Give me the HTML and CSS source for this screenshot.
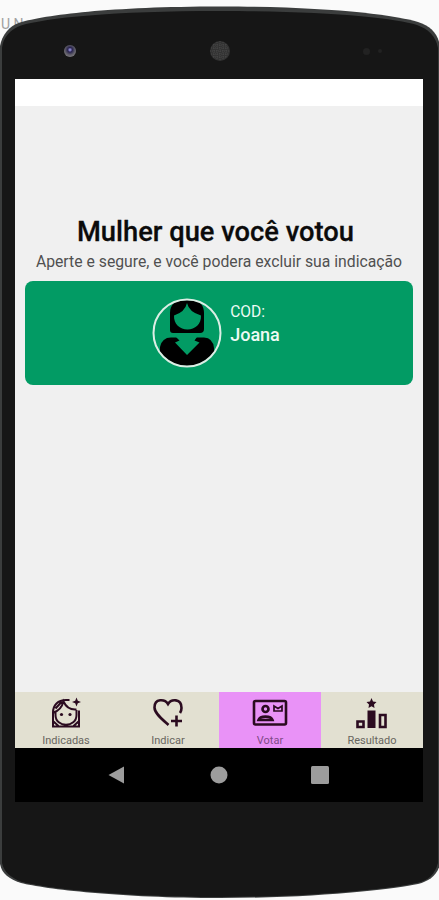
FILE: index.html
```
<!DOCTYPE html>
<html lang="pt-BR">
<head>
<meta charset="UTF-8" />
<meta name="viewport" content="width=device-width, initial-scale=1" />
<title>Votar</title>
<link rel="stylesheet" href="styles.css">
</head>
<body>
  <div class="phone">
    <span class="behind">U N</span>
    <svg class="shell" viewBox="0 0 439 900">
      <path class="edge" d="M0 46C2 35 9 26 20 22.500C45 15 110 6.500 220 6.500S395 15 418 22C431 26 438 34 440 46V864C437 876 429 881 418 884C395 889 320 898 220 898S45 889 21 883C9 879 2 874 0 864Z"/>
      <path class="body" d="M2 48C3 37 11 29 21 25.500C46 18 112 11 220 11S395 18 417 25C428 29 436 36 438 48V863C435 874 428 881 417 883C395 888 320 897 220 897S45 888 22 882C11 878 4 872 2 863Z"/>
    </svg>

    <div class="sensors">
      <div class="camera"></div>
      <svg class="speaker" width="22" height="22" viewBox="0 0 22 22">
        <circle cx="11" cy="11" r="10"/>
        <path d="M2 8h18M1 11h20M2 14h18M4 5h14M4 17h14M8 2v18M11 1v20M14 2v18M5 4v14M17 4v14"/>
      </svg>
      <div class="lights"><i></i><i></i></div>
    </div>

    <div class="screen">
      <div class="status-bar"></div>

      <main class="content">
        <h1>Mulher que você votou</h1>
        <p class="hint">Aperte e segure, e você podera excluir sua indicação</p>

        <div class="card">
          <svg class="avatar" width="70" height="70" viewBox="0 0 70 70">
            <defs><clipPath id="round"><circle cx="35" cy="35" r="33"/></clipPath></defs>
            <g clip-path="url(#round)">
              <path d="M18 32V15C18 6 24 2 31 2H40C48 2 52 8 52 15V31Q52 35 48 35H21Q18 35 18 32Z"/>
              <path class="skin" d="M35 5Q37 14 49 17.500C49.500 26 43 31.500 35.500 31.500S21.500 26 22 17.500Q33 14 35 5Z"/>
              <path d="M8 70V49Q10 39.500 19 39.500H52Q61 40 62 50V70Z"/>
              <path class="skin" d="M24 39H45L42.500 42.500L47.500 44.500L35 57L23 44.500L27.500 42.500Z"/>
            </g>
            <circle class="ring" cx="35" cy="35" r="33.500"/>
          </svg>
          <div class="person">
            <div class="code">COD:</div>
            <div class="name">Joana</div>
          </div>
        </div>
      </main>

      <nav class="tabs">
        <a class="tab">
          <svg width="36" height="36" viewBox="0 0 36 36">
            <path class="line hair" d="M21.500 5H18C10 5 5 10 5 17.500V31.500H31V15.500M5.500 17.500C10.500 16 14 12 15.500 6.500C18 12 23 15 28.500 14.500M7.500 13.500L14 6.500M7.500 17.500V20C7.500 33 28.500 33 28.500 20V15M5.500 26.500L10.500 31M30.500 26.500L25.500 31"/>
            <path d="M28.500 2.500L29.800 5.700L33 7L29.800 8.300L28.500 11.500L27.200 8.300L24 7L27.200 5.700Z"/>
            <circle cx="13.500" cy="19.500" r="1.600"/><circle cx="22" cy="19.500" r="1.600"/>
          </svg>
          <span>Indicadas</span>
        </a>
        <a class="tab">
          <svg width="36" height="36" viewBox="0 0 36 36">
            <path class="line" d="M18.500 30C13 25 4.500 18.500 4.500 12.500C4.500 3 15 4 18 9C21 4 31.500 3 31.500 13C31.500 15 31 16.500 30 18M26.500 20.500V31.500M21 26H32"/>
          </svg>
          <span>Indicar</span>
        </a>
        <a class="tab active">
          <svg width="36" height="36" viewBox="0 0 36 36">
            <rect class="line" x="2" y="6" width="32" height="23.500" rx="1.500"/>
            <circle class="line" cx="13.500" cy="14" r="3"/>
            <path class="line" d="M6.500 25C8 20.500 19 20.500 20.500 25Z"/>
            <path class="thin" d="M22 11V16H30V11L26 13.500Z"/>
          </svg>
          <span>Votar</span>
        </a>
        <a class="tab">
          <svg width="36" height="36" viewBox="0 0 36 36">
            <path d="M17.500 3L19 6.500L22.500 7L20 9.500L20.500 13L17.500 11.200L14.500 13L15 9.500L12.500 7L16 6.500ZM13.500 15.500H21.500V33H13.500Z"/>
            <path class="line" d="M3.500 26.500H9.500V32H3.500ZM26 20H31.500V32H26Z"/>
          </svg>
          <span>Resultado</span>
        </a>
      </nav>

      <div class="system-bar">
        <svg width="20" height="20" viewBox="0 0 20 20"><path d="M17 1.500V18.500L1.500 10Z"/></svg>
        <svg width="20" height="20" viewBox="0 0 20 20"><circle cx="10" cy="10" r="8.500"/></svg>
        <svg width="20" height="20" viewBox="0 0 20 20"><rect x="1" y="1" width="18" height="18" rx="1.500"/></svg>
      </div>
    </div>
  </div>
</body>
</html>
```
FILE: styles.css
```
* {
  box-sizing: border-box;
}

body {
  margin: 0;
  background: #fafafa;
  font-family: Roboto, sans-serif;
  overflow: hidden;
}

.phone {
  position: relative;
  width: 439px;
  height: 900px;
  padding: 0 16px 0 15px;
}

/* device frame, under the screen */
.shell {
  position: absolute;
  top: 0;
  left: 0;
  width: 439px;
  height: 900px;
}

.edge {
  fill: #3b3d3d;
}

.body {
  fill: #161616;
}

.behind {
  position: absolute;
  top: 16px;
  left: 1px;
  font-size: 14px;
  color: #a0a0a0;
}

.sensors {
  position: relative;
  display: flex;
  justify-content: space-between;
  align-items: center;
  height: 79px;
  padding: 23px 41px 0 49px;
}

.camera {
  width: 12px;
  height: 12px;
  border-radius: 50%;
  background: radial-gradient(circle at 50% 40%, #8580c8 0 8%, #29244e 25%, #62606a 55%, #77757a 75%, #222 100%);
}

.speaker circle {
  fill: #333;
}

.speaker path {
  stroke: #555;
  stroke-width: 0.6;
  stroke-dasharray: 1 1;
}

.lights {
  display: flex;
  align-items: center;
  gap: 8px;
}

.lights i {
  width: 4px;
  height: 4px;
  border-radius: 50%;
  background: #222;
}

.lights i:first-child {
  width: 7px;
  height: 7px;
}

.screen {
  position: relative;
  display: flex;
  flex-direction: column;
  height: 723px;
  background: #f0f0f0;
}

.status-bar {
  height: 27px;
  background: #fff;
}

.content {
  flex: 1;
  padding: 110px 10px 0;
  text-align: center;
}

h1 {
  margin: 0 0 0 -7px;
  font-size: 27.3px;
  font-weight: 500;
  line-height: 32px;
  color: #0b0b0b;
  -webkit-text-stroke: 0.3px #0b0b0b;
}

.hint {
  margin: 4px 0 10px;
  font-size: 15.75px;
  line-height: 19px;
  color: #505050;
  white-space: nowrap;
}

.card {
  display: flex;
  justify-content: center;
  gap: 8px;
  height: 104px;
  padding: 17px 6px 0 0;
  border-radius: 8px;
  background: #029b64;
}

.skin {
  fill: #029b64;
}

.ring {
  fill: none;
  stroke: #dceee5;
  stroke-width: 2;
}

.person {
  padding-top: 3px;
  text-align: left;
  color: #eefaf4;
}

.code {
  font-size: 15.6px;
  line-height: 22px;
}

.name {
  font-size: 18px;
  font-weight: 500;
  line-height: 24px;
}

.tabs {
  display: grid;
  grid-template-columns: repeat(4, 1fr);
  height: 56px;
}

.tab {
  display: flex;
  flex-direction: column;
  align-items: center;
  gap: 2px;
  padding-top: 3px;
  background: #e2e0d1;
  color: #68665f;
  font-size: 11px;
  line-height: 15px;
}

.tab svg {
  fill: #2b0b20;
}

.tab.active {
  background: #e992f7;
  color: #7e4a86;
}

.tab svg .line,
.tab svg .thin {
  fill: none;
  stroke: #2b0b20;
  stroke-width: 2.6;
}

.tab svg .thin {
  stroke-width: 1.7;
}

.tab svg .hair {
  stroke-width: 2;
}

.system-bar {
  display: flex;
  align-items: center;
  justify-content: space-between;
  height: 54px;
  padding: 0 93px 0 92px;
  background: #000;
}

.system-bar svg {
  fill: #9c9c9c;
}
```
